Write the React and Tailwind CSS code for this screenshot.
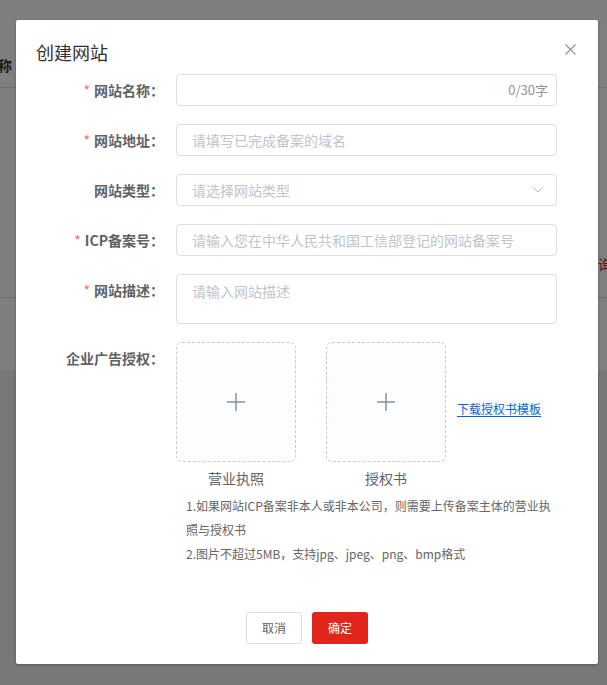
import { ChevronDown } from "lucide-react";

const FONT = { fontFamily: '"Noto Sans CJK SC", "Noto Sans", "Liberation Sans", sans-serif' };

function Label({ required, children }) {
  return (
    <div className="w-[140px] shrink-0 pr-[12px] h-[32px] leading-[32px] text-right text-[14px] font-bold text-[#606266]">
      {required && <span className="text-[#f56c6c] mr-[4px] font-normal">*</span>}
      {children}
    </div>
  );
}

function TextInput({ placeholder, suffix }) {
  return (
    <div className="relative w-[381px] h-[32px] border border-[#dcdfe6] rounded-[4px] bg-white flex items-center">
      <input
        className="w-full h-full px-[15px] text-[14px] text-[#606266] placeholder:text-[#c0c4cc] outline-none bg-transparent"
        placeholder={placeholder}
        style={FONT}
      />
      {suffix && (
        <span className="absolute right-[8px] text-[13px] text-[#909399]">{suffix}</span>
      )}
    </div>
  );
}

function FormRow({ label, required, children, className = "mb-[18px]" }) {
  return (
    <div className={`flex items-start ${className}`}>
      <Label required={required}>{label}</Label>
      {children}
    </div>
  );
}

function UploadBox({ caption }) {
  return (
    <div className="flex flex-col items-center w-[120px]">
      <div className="w-[120px] h-[120px] rounded-[6px] border border-dashed border-[#c0ccda] bg-[#fbfdff] flex items-center justify-center">
        <svg width="20" height="20" viewBox="0 0 20 20" fill="none" stroke="#8c939d" strokeWidth="1.5">
          <path d="M10 1v18M1 10h18" />
        </svg>
      </div>
      <div className="h-[32px] leading-[32px] text-[14px] text-[#606266]">{caption}</div>
    </div>
  );
}

function BackgroundPage() {
  return (
    <div className="min-h-[685px] bg-[#eef0f3]" style={FONT}>
      <div className="bg-white h-[370px]">
        <div className="h-[40px]" />
        <div className="h-[48px] border-b border-[#dde0e6] flex items-center -ml-[16px]">
          <span className="text-[14px] font-bold text-[#333] mt-[4px]">名称</span>
        </div>
        <div className="h-[210px] border-b border-[#dde0e6] flex items-end justify-end pb-[22px]">
          <span className="text-[14px] text-[#c21f17] -mr-[5px]">查询</span>
        </div>
      </div>
    </div>
  );
}

export default function App() {
  return (
    <div className="relative w-[607px] h-[685px] overflow-hidden" style={FONT}>
      <BackgroundPage />
      <div className="absolute inset-0 bg-black/50" />

      <div className="absolute left-[16px] top-[20px] w-[582px] bg-white rounded-[2px] shadow-[0_1px_3px_rgba(0,0,0,0.3)]">
        <div className="relative px-[20px] pt-[20px] pb-[10px]">
          <div className="text-[18px] leading-[24px] text-[#303133]">创建网站</div>
          <button className="absolute right-[22px] top-[23px] w-[12px] h-[12px] flex items-center justify-center">
            <svg width="11" height="11" viewBox="0 0 11 11" stroke="#909399" strokeWidth="1.2">
              <path d="M0.5 0.5l10 10M10.5 0.5l-10 10" />
            </svg>
          </button>
        </div>

        <div className="px-[20px]">
          <FormRow label="网站名称：" required>
            <TextInput suffix="0/30字" />
          </FormRow>
          <FormRow label="网站地址：" required>
            <TextInput placeholder="请填写已完成备案的域名" />
          </FormRow>
          <FormRow label="网站类型：">
            <div className="w-[381px] h-[32px] border border-[#dcdfe6] rounded-[4px] flex items-center justify-between pl-[15px] pr-[10px]">
              <span className="text-[14px] text-[#c0c4cc]">请选择网站类型</span>
              <ChevronDown size={16} strokeWidth={1.5} className="text-[#b4b8c0]" />
            </div>
          </FormRow>
          <FormRow label="ICP备案号：" required>
            <TextInput placeholder="请输入您在中华人民共和国工信部登记的网站备案号" />
          </FormRow>
          <FormRow label="网站描述：" required>
            <textarea
              className="w-[381px] h-[50px] border border-[#dcdfe6] rounded-[4px] px-[15px] py-[5px] text-[14px] leading-[22px] resize-none outline-none placeholder:text-[#c0c4cc]"
              placeholder="请输入网站描述"
              style={FONT}
            />
          </FormRow>
          <FormRow label="企业广告授权：" className="">
            <div className="w-[381px]">
              <div className="flex items-start">
                <UploadBox caption="营业执照" />
                <div className="ml-[30px]">
                  <UploadBox caption="授权书" />
                </div>
                <div className="ml-[11px] h-[120px] flex items-center">
                  <a href="#" className="mt-[14px] text-[12px] text-[#0b62d6] underline underline-offset-2">
                    下载授权书模板
                  </a>
                </div>
              </div>
              <div className="pl-[10px] text-[12px] leading-[24px] text-[#666]">
                <p className="whitespace-nowrap">1.如果网站ICP备案非本人或非本公司，则需要上传备案主体的营业执</p>
                <p>照与授权书</p>
                <p>2.图片不超过5MB，支持jpg、jpeg、png、bmp格式</p>
              </div>
            </div>
          </FormRow>
        </div>

        <div className="flex justify-center gap-[10px] pt-[46px] pb-[20px]">
          <button className="w-[56px] h-[32px] border border-[#dcdfe6] rounded-[3px] bg-white text-[12px] text-[#606266]">
            取消
          </button>
          <button className="w-[56px] h-[32px] rounded-[3px] bg-[#e1251b] text-[12px] text-white">
            确定
          </button>
        </div>
      </div>
    </div>
  );
}
